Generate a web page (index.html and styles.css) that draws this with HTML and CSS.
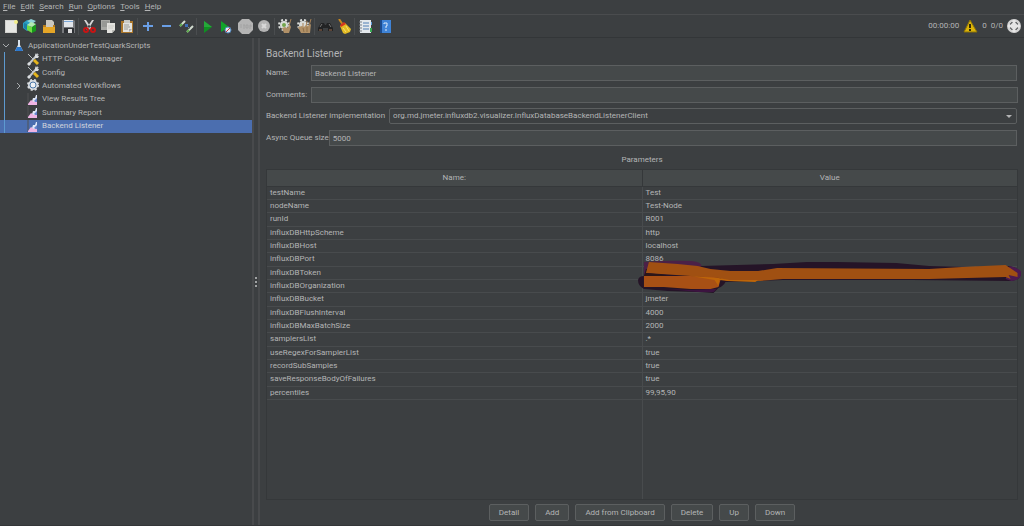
FILE: index.html
```html
<!DOCTYPE html>
<html lang="en">

<head>
  <meta charset="UTF-8">
  <meta name="viewport" content="width=device-width, initial-scale=1.0">
  <title>Apache JMeter - Backend Listener</title>
  <link rel="stylesheet" href="styles.css">
</head>

<body>
  <nav class="menubar">
    <a href="#file"><u>F</u>ile</a>
    <a href="#edit"><u>E</u>dit</a>
    <a href="#search"><u>S</u>earch</a>
    <a href="#run"><u>R</u>un</a>
    <a href="#options"><u>O</u>ptions</a>
    <a href="#tools"><u>T</u>ools</a>
    <a href="#help"><u>H</u>elp</a>
  </nav>

  <header class="toolbar">
    <div class="tools">
      <button aria-label="New">
        <svg viewBox="0 0 15 15"><path d="M1 1h12v13H1z" fill="#d2d2ce"/><path d="M2 2h10v11H2z" fill="#e6e6e3"/><circle cx="12" cy="3" r="2" fill="#f3ee8b"/></svg>
      </button>
      <button aria-label="Templates">
        <svg viewBox="0 0 15 15"><path d="M0 4l4-3 3 1v8l-3 2-4-3z" fill="#2a9fc4"/><path d="M1 4l3 1v6l-3-2z" fill="#1c7fa5"/><path d="M4 2l4-2 5 2-4 3z" fill="#8fd3d8"/><path d="M4 6l5 2v6l-5-3z" fill="#6fdc46"/><path d="M9 8l4-3v7l-4 2z" fill="#17991c"/><path d="M4 6l4-3 5 2-4 3z" fill="#b2ecb0"/></svg>
      </button>
      <button aria-label="Open">
        <svg viewBox="0 0 15 15"><path d="M4 1h6l2 2v6H4z" fill="#c9c7bf"/><path d="M1 6h3v2h7V6h2v7H1z" fill="#b87c1a"/><path d="M1 8h12v6H1z" fill="#e5a627"/></svg>
      </button>
      <button aria-label="Save">
        <svg viewBox="0 0 15 15"><path d="M1 1h12l1 1v12H1z" fill="#77797c"/><path d="M3 1h9v7H3z" fill="#e2e6ea"/><path d="M3 2h9v1H3z" fill="#7aa7d8"/><path d="M3 9h10v5H3z" fill="#2e3135"/><path d="M7 10h4v4H7z" fill="#dedede"/></svg>
      </button>
      <span class="separator"></span>
      <button aria-label="Cut">
        <svg viewBox="0 0 15 15"><path d="M2 1l2 0 6 9-2 1zM12 1h-2L4 10l2 1z" fill="#d4d5d6"/><g fill="none" stroke="#c81414" stroke-width="2"><ellipse cx="4" cy="11" rx="2" ry="2"/><ellipse cx="11" cy="11" rx="2" ry="2"/></g></svg>
      </button>
      <button aria-label="Copy">
        <svg viewBox="0 0 15 15"><path d="M0 1h9v10H0z" fill="#a9aaa6"/><path d="M1 3h7M1 5h7M1 7h5" stroke="#858784"/><path d="M6 4h8v7l-3 3H6z" fill="#e2e2de"/><path d="M11 14v-3h3z" fill="#babab6"/><path d="M7 7h6M7 9h5" stroke="#cacac5"/></svg>
      </button>
      <button aria-label="Paste">
        <svg viewBox="0 0 15 15"><path d="M1 2h12v12H1z" fill="#a8752b"/><path d="M3 4h9v9H3z" fill="#e2e2de"/><path d="M4 1h6v3H4z" fill="#c9c9c4"/><path d="M4 6h5M4 8h6M4 10h4" stroke="#9b9c98"/><path d="M9 13v-3h3z" fill="#aaa"/></svg>
      </button>
      <span class="separator"></span>
      <button aria-label="Expand all">
        <svg viewBox="0 0 15 15"><path d="M6 3h2v3h4v2H8v4H6V8H2V6h4z" fill="#6a9fe6"/></svg>
      </button>
      <button aria-label="Collapse all">
        <svg viewBox="0 0 15 15"><path d="M2 6h9v2H2z" fill="#6a9fe6"/></svg>
      </button>
      <button aria-label="Toggle">
        <svg viewBox="0 0 15 15"><path d="M1 7l5-5M8 13l6-6" stroke="#d2dcd0" stroke-width="2"/><path d="M1 7l2-2M8 13l2-2" stroke="#5eab4e" stroke-width="2"/><path d="M6 5l5 5" stroke="#7d8a94"/><path d="M6 5h3v3H6z" fill="#3c6db8"/></svg>
      </button>
      <span class="separator"></span>
      <button aria-label="Start">
        <svg viewBox="0 0 15 15"><path d="M4 2l8 6-8 6z" fill="#0f8f22"/><path d="M4 2l8 6H4z" fill="#25a839"/></svg>
      </button>
      <button aria-label="Start no pauses">
        <svg viewBox="0 0 15 15"><path d="M2 2l8 6-8 5z" fill="#11a32a"/><circle cx="9" cy="11" r="3" fill="#dce8f2" stroke="#5387bd"/><path d="M7 13l4-4" stroke="#d03434"/></svg>
      </button>
      <button aria-label="Stop">
        <svg viewBox="0 0 15 15"><path d="M4 0h7l4 4v7l-4 4H4l-4-4V4z" fill="#b4b4b4"/><path d="M2 6h2M2 8h2M5 6h2M6 6v4M8 6h2v3H8zM12 10V6h1v2" stroke="#a2a2a2" fill="none"/></svg>
      </button>
      <button aria-label="Shutdown">
        <svg viewBox="0 0 15 15"><circle cx="7" cy="7" r="6" fill="#b4b4b4"/><path d="M5 5l4 4M9 5l-4 4" stroke="#d8d8d8" stroke-width="2"/></svg>
      </button>
      <span class="separator"></span>
      <button aria-label="Clear">
        <svg viewBox="0 0 15 15"><circle cx="6" cy="6" r="4" fill="#d9dcd9"/><circle cx="6" cy="6" r="5" fill="none" stroke="#d9dcd9" stroke-width="2" stroke-dasharray="2 2"/><circle cx="6" cy="6" r="2" fill="#73a64d"/><path d="M13 0l-2 7" stroke="#a98358"/><path d="M4 9l3-1 2 1 3-3 1 2-2 6H6z" fill="#b09067"/></svg>
      </button>
      <button aria-label="Clear all">
        <svg viewBox="0 0 15 15"><circle cx="6" cy="6" r="4" fill="#d9dcd9"/><circle cx="6" cy="6" r="5" fill="none" stroke="#d9dcd9" stroke-width="2" stroke-dasharray="2 2"/><path d="M14 0l-2 7M10 2L9 8M6 4v4" stroke="#a98358"/><path d="M1 8l4-1 2 1 2-2 2 1 3-2-1 9H4z" fill="#b09067"/><path d="M6 9l1 4M10 8v5" stroke="#8e7049"/></svg>
      </button>
      <span class="separator"></span>
      <button aria-label="Search">
        <svg viewBox="0 0 15 15"><path d="M3 4h3l1 2h1l1-2h3l3 5v3h-5V9H5v3H0V9z" fill="#222324"/><path d="M2 8l2-3M11 5l2 3" stroke="#777"/><path d="M1 11h3M11 11h3" stroke="#96684d"/></svg>
      </button>
      <button aria-label="Reset search">
        <svg viewBox="0 0 15 15"><path d="M2 0l4 6" stroke="#c8881f" stroke-width="2"/><path d="M3 7l5-3 6 6-1 3-5 2-2-1z" fill="#e3bb24"/><path d="M3 6l4-3 2 2-5 3z" fill="#d53620"/><path d="M6 9l3 4M9 7l3 5" stroke="#f7e06a"/></svg>
      </button>
      <span class="separator"></span>
      <button aria-label="Function helper">
        <svg viewBox="0 0 15 15"><path d="M2 1h11v13H2z" fill="#e4e8ec"/><path d="M5 4h6M5 7h6M5 10h6" stroke="#507eb5"/><path d="M1 3h3M1 6h3M1 9h3M1 12h3" stroke="#787f86"/><path d="M13 3h1v3h-1z" fill="#5b9bdc"/><path d="M12 9h2v4h-2z" fill="#36a852"/></svg>
      </button>
      <button aria-label="Help">
        <svg viewBox="0 0 15 15"><path d="M3 1h11v13H3z" fill="#3f83d6"/><path d="M3 1h2v13H3z" fill="#1c4b8d"/><path d="M7 5V4h3v3H9v2M9 10v2" stroke="#dceafa" fill="none"/></svg>
      </button>
    </div>
    <div class="status">
      <span>00:00:00</span>
      <button aria-label="Log errors">
        <svg viewBox="0 0 15 15"><path d="M7 1l7 12H1z" fill="#dcb408" stroke="#8a7208"/><path d="M7 5v4M7 10v2" stroke="#332b09" stroke-width="2"/></svg>
      </button>
      <span>0</span>
      <span>0/0</span>
      <svg class="threads" viewBox="0 0 15 15"><circle cx="7" cy="7" r="7" fill="#d2d2d2"/><circle cx="7" cy="7" r="4" fill="#d2d2d2" stroke="#3d4042" stroke-width="1"/><path d="M7 1v12M1 7h12" stroke="#e6e6e6" stroke-width="3"/></svg>
    </div>
  </header>

  <main class="workspace">
    <aside class="sidebar">
      <ul class="tree">
        <li>
          <svg class="arrow" viewBox="0 0 10 10"><path d="M2 3l3 3 3-3"/></svg>
          <svg class="icon" viewBox="0 0 13 13"><path d="M5 1h2v5l3 6H2l3-6z" fill="#d9e4ee"/><path d="M4 8h4l2 4H2z" fill="#2c79cf"/></svg>
          <a href="#plan">ApplicationUnderTestQuarkScripts</a>
        </li>
        <li class="child">
          <svg class="icon" viewBox="0 0 13 13"><use href="#wrench"/></svg>
          <a href="#cookies">HTTP Cookie Manager</a>
        </li>
        <li class="child">
          <svg class="icon" viewBox="0 0 13 13"><use href="#wrench"/></svg>
          <a href="#config">Config</a>
        </li>
        <li class="child">
          <svg class="arrow" viewBox="0 0 10 10"><path d="M2 2l3 3-3 3"/></svg>
          <svg class="icon" viewBox="0 0 13 13"><circle cx="6" cy="6" r="5" fill="#d9dde1" stroke="#d9dde1" stroke-width="2" stroke-dasharray="2 2"/><circle cx="6" cy="6" r="3" fill="#edf1f4" stroke="#4b78a8"/></svg>
          <a href="#workflows">Automated Workflows</a>
        </li>
        <li class="child">
          <svg class="icon" viewBox="0 0 13 13"><use href="#chart"/></svg>
          <a href="#results">View Results Tree</a>
        </li>
        <li class="child">
          <svg class="icon" viewBox="0 0 13 13"><use href="#chart"/></svg>
          <a href="#summary">Summary Report</a>
        </li>
        <li class="child selected">
          <svg class="icon" viewBox="0 0 13 13"><use href="#chart"/></svg>
          <a href="#backend">Backend Listener</a>
        </li>
      </ul>
    </aside>
    <div class="splitter"><span></span><span></span><span></span></div>

    <section class="editor">
      <h1>Backend Listener</h1>
      <div class="field name">
        <label for="name">Name:</label>
        <input type="text" id="name" value="Backend Listener">
      </div>
      <div class="field comments">
        <label for="comments">Comments:</label>
        <input type="text" id="comments">
      </div>
      <div class="field implementation">
        <label for="implementation">Backend Listener implementation</label>
        <div class="combo">
          <select id="implementation">
            <option>org.md.jmeter.influxdb2.visualizer.InfluxDatabaseBackendListenerClient</option>
          </select>
        </div>
      </div>
      <div class="field queue">
        <label for="queue">Async Queue size</label>
        <input type="text" id="queue" value="5000">
      </div>

      <h2>Parameters</h2>
      <div class="table-wrap">
        <table>
          <thead>
            <tr><th>Name:</th><th>Value</th></tr>
          </thead>
          <tbody>
            <tr><td>testName</td><td>Test</td></tr>
            <tr><td>nodeName</td><td>Test-Node</td></tr>
            <tr><td>runId</td><td>R001</td></tr>
            <tr><td>influxDBHttpScheme</td><td>http</td></tr>
            <tr><td>influxDBHost</td><td>localhost</td></tr>
            <tr><td>influxDBPort</td><td>8086</td></tr>
            <tr><td>influxDBToken</td><td class="redacted">
              <svg viewBox="0 0 386 36" preserveAspectRatio="none">
                <path d="M6 8L63 6 136 4 170 2 200 2 260 3 293 6 340 7 374 6Q386 9 385 15 384 20 376 21L276 20 146 20 88 22Q86 26 81 28L76 33 60 32 30 31 6 29Q0 26 0 20 1 16 6 16Z" fill="#251427"/>
                <path d="M6 2Q30 0 54 1 64 2 64 6L60 8 8 9 6 16Z" fill="#4b2147"/>
                <path d="M8 28l45 2 20-1 6 0-3 3-16 0-30-3z" fill="#3c1440"/>
                <path d="M374 6Q387 9 386 14 385 20 376 21L370 19Z" fill="#4b1a50"/>
                <path d="M11 2L40 4 60 6 73 9 93 11 121 11 140 8 293 9 326 7 370 5 382 13 382 17 373 15 375 19 370 17 293 19 146 19 123 21 90 21 81 18 53 16 8 13Z" fill="#a05012"/>
                <path d="M6 16L53 16 76 17Q83 18 83 20L81 27 73 29 53 29 26 27 6 27Z" fill="#a85015"/>
                <path d="M53 16L81 18 92 20 121 20 118 22 90 21 82 20 81 26 77 20Z" fill="#bd6509"/>
                <path d="M8 13l20 2-4 1-18 0z" fill="#2c1618"/>
              </svg>
            </td></tr>
            <tr><td>influxDBOrganization</td><td></td></tr>
            <tr><td>influxDBBucket</td><td>jmeter</td></tr>
            <tr><td>influxDBFlushInterval</td><td>4000</td></tr>
            <tr><td>influxDBMaxBatchSize</td><td>2000</td></tr>
            <tr><td>samplersList</td><td>.*</td></tr>
            <tr><td>useRegexForSamplerList</td><td>true</td></tr>
            <tr><td>recordSubSamples</td><td>true</td></tr>
            <tr><td>saveResponseBodyOfFailures</td><td>true</td></tr>
            <tr><td>percentiles</td><td>99,95,90</td></tr>
          </tbody>
        </table>
        <div class="table-rest"><span></span><span></span></div>
      </div>

      <div class="actions">
        <button>Detail</button>
        <button>Add</button>
        <button>Add from Clipboard</button>
        <button>Delete</button>
        <button>Up</button>
        <button>Down</button>
      </div>
    </section>
  </main>

  <!-- shared tree icons -->
  <svg class="symbols" aria-hidden="true">
    <g id="wrench">
      <path d="M11 1L2 11" stroke="#c3c7ca" stroke-width="2"/>
      <path d="M1 1l6 6" stroke="#b9bdc0"/>
      <path d="M7 7l4 4" stroke="#e5b51c" stroke-width="3"/>
      <path d="M0 11l2-2 2 2-2 2z" fill="#dadde0"/>
      <path d="M9 0l1 3 2 0-1 2-3 0 0-3z" fill="#dadde0"/>
    </g>
    <g id="chart">
      <path d="M1 0v12" stroke="#505355"/>
      <path d="M5 8l1-3 2 0 1-3 1 0v10H5z" fill="#dfe7f6"/>
      <path d="M7 8l3-3v5z" fill="#6583cc"/>
      <path d="M1 11l3-4 3 2 3 0v3H1z" fill="#eeb4e3"/>
    </g>
  </svg>
</body>

</html>
```

FILE: styles.css
```css
* {
  box-sizing: border-box;
}

body {
  margin: 0;
  min-height: 100vh;
  display: flex;
  flex-direction: column;
  background-color: #3c3f41;
  color: #b4b5b6;
  font-family: Roboto, "Noto Sans", sans-serif;
  font-size: 8px;
  line-height: 12px;
}

a {
  color: inherit;
  text-decoration: none;
}

button,
input,
select {
  font: inherit;
  color: inherit;
  margin: 0;
}

/* menu */
.menubar {
  display: flex;
  gap: 5px;
  height: 15px;
  padding: 1px 3px;
  border-bottom: 1px solid #4a4c4e;
}

/* toolbar */
.toolbar {
  display: flex;
  justify-content: space-between;
  align-items: center;
  height: 23px;
  padding: 0 2px;
  border-bottom: 1px solid #333638;
}

.tools,
.status {
  display: flex;
  align-items: center;
}

.toolbar button {
  display: flex;
  padding: 2px;
  border: 0;
  background: none;
}

.toolbar svg {
  width: 15px;
  height: 15px;
}

.separator {
  width: 2px;
  height: 17px;
  border-left: 1px solid #4a4d4f;
}

.status {
  gap: 4px;
}

.toolbar .status button {
  padding: 0;
}

/* tree */
.workspace {
  flex: 1;
  display: flex;
  border-bottom: 1px solid #343638;
}

.sidebar {
  width: 252px;
  padding-top: 1px;
}

.tree {
  display: grid;
  grid-auto-rows: 1fr;
  height: 94px;
  margin: 0;
  padding: 0;
  list-style: none;
}

.tree li {
  display: flex;
  align-items: center;
  gap: 2px;
  padding-left: 1px;
}

.tree .child {
  margin-left: 4px;
  padding-left: 22px;
  border-left: 1px solid #5d9ad0;
}

.tree .child:has(.arrow) {
  padding-left: 10px;
}

.tree .selected {
  background-color: #4b6eaf;
  box-shadow: -4px 0 #4b6eaf;
  color: #d0d4dc;
}

.arrow {
  width: 10px;
  height: 10px;
  fill: none;
  stroke: #a8abad;
}

.icon {
  width: 13px;
  height: 13px;
}

.symbols {
  display: none;
}

.splitter {
  display: flex;
  flex-direction: column;
  align-items: center;
  justify-content: center;
  gap: 2px;
  width: 8px;
  border: solid #484a4c;
  border-width: 0 2px;
}

.splitter span {
  width: 2px;
  height: 2px;
  background-color: #a0a2a3;
}

/* editor */
.editor {
  flex: 1;
  display: flex;
  flex-direction: column;
  padding: 8px 6px 4px;
}

h1 {
  margin: 0 0 3px;
  font-size: 10px;
  font-weight: normal;
  line-height: 16px;
}

h2 {
  margin: 8px 0 3px;
  font-size: 8px;
  font-weight: normal;
  text-align: center;
}

.field {
  display: flex;
  align-items: center;
  gap: 4px;
  margin-right: 1px;
  margin-bottom: 6px;
}

.field input,
.field select {
  flex: 1;
  width: 100%;
  height: 16px;
  padding: 0 3px;
  border: 1px solid #5c5f60;
  background-color: #45494a;
}

.field.name label {
  width: 41px;
}

.field.comments {
  margin-right: 0;
  margin-bottom: 5px;
}

.field.queue {
  gap: 0;
  margin-bottom: 0;
}

.combo {
  flex: 1;
  position: relative;
}

.field select {
  display: block;
  appearance: none;
  background-color: #3c3f41;
  border-radius: 2px;
}

.combo::after {
  content: "";
  position: absolute;
  top: 7px;
  right: 5px;
  border: 3px solid transparent;
  border-top-color: #b4b5b6;
  border-bottom: 0;
}

/* parameters */
.table-wrap {
  flex: 1;
  display: flex;
  flex-direction: column;
  border: 1px solid #35383a;
}

table {
  width: 100%;
  height: 230px;
  table-layout: fixed;
  border-collapse: collapse;
}

th {
  height: 16px;
  padding: 0;
  background-color: #45494a;
  font-weight: normal;
  border-bottom: 1px solid #35383a;
}

th + th {
  border-left: 1px solid #35383a;
}

td {
  padding: 0 3px;
  line-height: 12px;
  border-bottom: 1px solid #484b4d;
}

td + td {
  border-left: 1px solid #484b4d;
}

/* marker strokes over the hidden values */
.redacted {
  position: relative;
}

.redacted svg {
  position: absolute;
  top: -7px;
  left: -5px;
  width: calc(100% + 9px);
  height: 36px;
}

.table-rest {
  flex: 1;
  display: grid;
  grid-template-columns: 1fr 1fr;
}

.table-rest span + span {
  border-left: 1px solid #484b4d;
}

/* buttons */
.actions {
  display: flex;
  justify-content: center;
  gap: 6px;
  margin-top: 4px;
}

.actions button {
  height: 17px;
  padding: 0 9px;
  border: 1px solid #5c5f60;
  border-radius: 2px;
  background-color: #45494a;
}
```
